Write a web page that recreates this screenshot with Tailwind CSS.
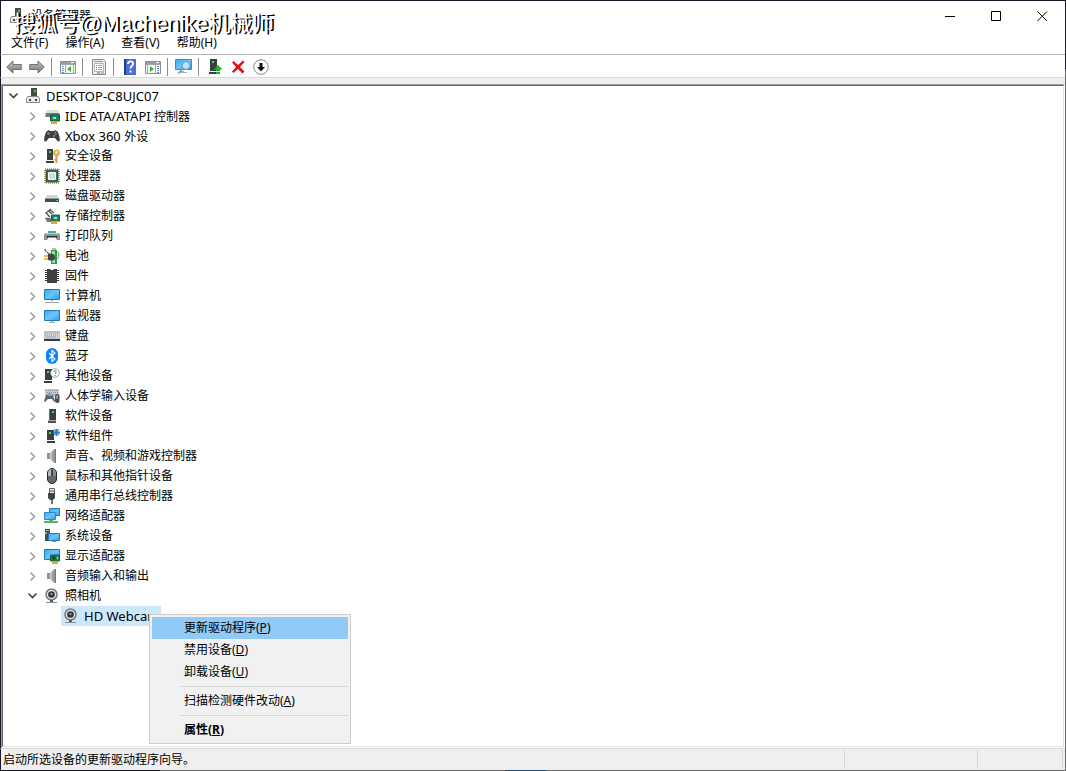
<!DOCTYPE html>
<html lang="zh-CN">
<head>
<meta charset="utf-8">
<title>设备管理器</title>
<script src="https://cdn.jsdelivr.net/npm/@tailwindcss/browser@4"></script>
</head>
<body class="h-screen overflow-hidden bg-[#1b1728] font-['Noto_Sans','Noto_Sans_CJK_SC',sans-serif] text-xs text-black">
<svg class="absolute size-0" aria-hidden="true">
  <defs>
    <linearGradient id="sky" x1="0" y1="0" x2="1" y2="1"><stop offset="0" stop-color="#3aa9f0"/><stop offset=".5" stop-color="#6cc4fb"/><stop offset="1" stop-color="#2b9fee"/></linearGradient>
    <linearGradient id="steel" x1="0" y1="0" x2="0" y2="1"><stop offset="0" stop-color="#c4c4c4"/><stop offset="1" stop-color="#757575"/></linearGradient>
    <linearGradient id="cone" x1="0" y1="0" x2="1" y2="0"><stop offset="0" stop-color="#d5d8da"/><stop offset="1" stop-color="#7b8084"/></linearGradient>
  </defs>
  <symbol id="pc" viewBox="0 0 16 16"><rect x="6" y="0" width="6" height="9" fill="#4a4a4a"/><rect x="9" y="2" width="2" height="2" fill="#2fdc4a"/><path d="M2.500 8.500h11l1 2v4h-13v-4z" fill="#ececec" stroke="#8a8a8a"/><path d="M4 11h2v2H4zM10 11h2v2h-2z" fill="#444"/></symbol>
  <symbol id="ide" viewBox="0 0 16 16"><path d="M3 2h11l1.500 3H1.500z" fill="#dcdfe0"/><path d="M1.500 5h14v4h-14z" fill="#74797b"/><path d="M6.500 7h9v6h-9z" fill="#17875a" stroke="#075c3b"/><path d="M9 9h3v2H9z" fill="#a8dfc6"/><path d="M7 13.500h6V16H7z" fill="#f0a020"/></symbol>
  <symbol id="pad" viewBox="0 0 16 16"><path d="M3 3l2-1 1 1h4l1-1 2 1c1.500 1.500 3 6 2.800 9-.3 2-1.800 1.800-2.800.5L11 10H5l-2 2.500C2 13.800.5 14 .2 12 0 9 1.500 4.500 3 3z" fill="#3d3f41"/><circle cx="4.500" cy="5.500" r="1.300" fill="#888"/><circle cx="10" cy="8" r="1" fill="#888"/><path d="M11 4h1v1h-1z" fill="#e8b820"/><path d="M12 5h1v1h-1z" fill="#e03a2e"/><path d="M10 5h1v1h-1z" fill="#2b7fe0"/><path d="M11 6h1v1h-1z" fill="#35b74a"/></symbol>
  <symbol id="tower" viewBox="0 0 16 16"><path d="M5 1h7v11H5z" fill="#3c3f41"/><path d="M4 12.500h8V15H4z" fill="#505456"/><path d="M8 3h2v2H8z" fill="#37e84e"/><path d="M5 1h1v11H5z" fill="#6a6d70"/></symbol>
  <symbol id="key" viewBox="0 0 16 16"><path d="M3 1h6v11H3zM2 13h8v2H2z" fill="#3c3f41"/><path d="M5 3h2v2H5z" fill="#37e84e"/><circle cx="12.500" cy="5" r="3" fill="#edbd68" stroke="#c8872e" stroke-width=".7"/><circle cx="12.500" cy="4" r="1" fill="#fff"/><path d="M11.500 8h2v7h-2zM10 11h1.500v1.500H10z" fill="#dc9f42"/></symbol>
  <symbol id="cpu" viewBox="0 0 16 16"><path d="M1 1h14v14H1z" fill="none" stroke="#b98b3b" stroke-width="1.500" stroke-dasharray="1 1"/><path d="M1.500 1.500h13v13h-13z" fill="#2f6a50"/><path d="M4.500 4.500h7v7h-7z" fill="#dadada" stroke="#f7f7f7"/></symbol>
  <symbol id="disk" viewBox="0 0 16 16"><path d="M3 7h10l2 3.500H1z" fill="#d5d7d8"/><path d="M1 10.500h14V14H1z" fill="#45494b"/><path d="M12 12h2v1h-2z" fill="#32dc65"/></symbol>
  <symbol id="store" viewBox="0 0 16 16"><path d="M7 1L2 5l4 4M5 3.500L8 6M6 2l4 3" fill="none" stroke="#555" stroke-width="1.400"/><path d="M1 10h6v4H3z" fill="#777"/><path d="M1 9h5v1H1z" fill="#ccc"/><path d="M7.500 7h8v6h-8z" fill="#238667" stroke="#0d6445"/><path d="M10 9h3v2h-3z" fill="#a6ddc4"/><path d="M7 13.500h6V16H7z" fill="#f0a424"/></symbol>
  <symbol id="print" viewBox="0 0 16 16"><path d="M4 3h8v3H4z" fill="#40aaf0"/><path d="M8 3h4v3H8z" fill="#35b96a"/><path d="M1 5h14l1 2v5H0V7z" fill="#8b9194"/><path d="M1 5h14v1H1z" fill="#c7cacc"/><path d="M3 8h10v2H3z" fill="#303335"/><path d="M4 9.500h8l1 4H3z" fill="#f7f7f7"/></symbol>
  <symbol id="battery" viewBox="0 0 16 16"><path d="M7 2h6v14H7z" fill="#299a3e"/><path d="M8 0h4v2H8z" fill="#bbb"/><path d="M8 3h3v12H8z" fill="#8be698"/><path d="M13 4c3 0 2 6 0 7" fill="none" stroke="#777"/><path d="M1 1c0 3 3 4 5 5" fill="none" stroke="#333"/><path d="M4 6c5-1 7 0 7 3.500S8 13 4 12z" fill="#454545"/><path d="M0 8h4M0 11h4" stroke="#dda22a" stroke-width="1.300"/></symbol>
  <symbol id="chip" viewBox="0 0 16 16"><path d="M1 2.500h3M1 4.500h3M1 6.500h3M1 8.500h3M1 10.500h3M1 12.500h3M12 2.500h3M12 4.500h3M12 6.500h3M12 8.500h3M12 10.500h3M12 12.500h3" stroke="#333"/><path d="M3 1h3l1 1h2l1-1h3v14H3z" fill="#3f4142"/></symbol>
  <symbol id="computer" viewBox="0 0 16 16"><path d="M.5 1.500h15v10H.5z" fill="url(#sky)" stroke="#2279b5"/><path d="M7 12h2v1H7z" fill="#aaa"/><path d="M1 14h14v1H1z" fill="#8fa4b3"/></symbol>
  <symbol id="monitor" viewBox="0 0 16 16"><path d="M.5 2.500h15v10H.5z" fill="url(#sky)" stroke="#2279b5"/><path d="M7 13h2v1H7zM5 14h6v1H5z" fill="#a7b0b6"/></symbol>
  <symbol id="keys" viewBox="0 0 16 16"><path d="M0 3h16v8H0z" fill="#bcc3c6"/><path d="M0 11h16v2H0z" fill="#383c3e"/><path d="M1 5h14M2 7h13M1 9h2M12 9h3" stroke="#fff" stroke-dasharray="1 1"/><path d="M1 4.300h14M1 6h14M1 8h14" stroke="#858c90" stroke-width=".6" stroke-dasharray="1 1"/></symbol>
  <symbol id="bt" viewBox="0 0 16 16"><rect x="2" width="12" height="16" rx="6" fill="#0a84f4"/><path d="M5 5l6 6-3 2.500v-11L11 5l-6 6" fill="none" stroke="#fff" stroke-width="1.100"/></symbol>
  <symbol id="other" viewBox="0 0 16 16"><path d="M1 1h7v11H1zM0 13h8v2H0z" fill="#3c3f41"/><path d="M3 3h2v2H3z" fill="#37e84e"/><circle cx="11" cy="5" r="4.300" fill="#fff" stroke="#a4a8aa"/><path d="M9.500 3.800c.3-1.500 3-1.300 2.700.3-.2.800-1.200.9-1.200 1.900M11 7v1" fill="none" stroke="#477a9a"/></symbol>
  <symbol id="hid" viewBox="0 0 16 16"><path d="M1 1h14v7H1z" fill="#c4c9cb"/><path d="M2 2.500h12M3 4.500h11M2 6.500h12" stroke="#787e81" stroke-width=".8" stroke-dasharray="1 1"/><path d="M2 7h2l1 1h2l1-1h1l2 6-1 1-2-3H4l-3 3-1-1z" fill="#606568"/><path d="M4 5h3v3H4z" fill="#52ace7"/><rect x="11" y="6" width="4.500" height="9" rx="2" fill="#4b5053"/><path d="M12.500 7.500h1v3h-1z" fill="#eee"/></symbol>
  <symbol id="component" viewBox="0 0 16 16"><path d="M3 2h7v10H3zM3 13h8v2H3z" fill="#3c3f41"/><path d="M5 4h2v2H5z" fill="#37e84e"/><path d="M11.500 1h2v2.500H16v2h-2.500V8h-2V5.500H9v-2h2.500z" fill="#2b7dc5"/><path d="M10 1l5 6M15 1l-5 6" stroke="#2b7dc5"/></symbol>
  <symbol id="sound" viewBox="0 0 16 16"><path d="M3 5h3v6H3z" fill="#8f959a"/><path d="M6 5l4.500-4v14L6 11z" fill="url(#cone)"/><path d="M10.500 1h1.500v14h-1.500z" fill="#74797d"/></symbol>
  <symbol id="mouse" viewBox="0 0 16 16"><rect x="3.500" y=".5" width="9" height="15" rx="4.500" fill="#62686c" stroke="#24282b"/><path d="M4 6c0-3 1-5 3-5v7H4z" fill="#b7bec3"/><path d="M9 1c2 0 3 2 3 5v2H9z" fill="#858d93"/><path d="M7.500 2h1v6h-1z" fill="#202426"/></symbol>
  <symbol id="usb" viewBox="0 0 16 16"><path d="M5.500.5h5v5h-5z" fill="#e7e7e7" stroke="#666"/><path d="M6.500 2h1v2h-1zM8.500 2h1v2h-1z" fill="#555"/><path d="M4 5h7v5l-2 2H6l-2-2z" fill="#404446"/><path d="M7 12h2v4H7z" fill="#74787a"/></symbol>
  <symbol id="net" viewBox="0 0 16 16"><path d="M5.500.5h10v7h-10z" fill="url(#sky)" stroke="#2279b5"/><path d="M.5 4.500h11v7H.5z" fill="url(#sky)" stroke="#2a88c8"/><path d="M5 12h4v1h5v2H0v-2h5z" fill="#55b85f"/></symbol>
  <symbol id="system" viewBox="0 0 16 16"><path d="M1 1h5v12H1z" fill="#484c4f"/><path d="M2 2h3v1H2z" fill="#aaa"/><path d="M1 4h2v2H1z" fill="#37e84e"/><path d="M4.500 5.500h11v7h-11z" fill="url(#sky)" stroke="#2279b5"/><path d="M8 13h4v1H8z" fill="#999"/></symbol>
  <symbol id="display" viewBox="0 0 16 16"><path d="M.5 1.500h15v10H.5z" fill="url(#sky)" stroke="#2279b5"/><path d="M6.500 7h9v6h-9z" fill="#21805d" stroke="#0b5d40"/><circle cx="10" cy="10" r="1.700" fill="#193c30"/><path d="M13 9h1v2h-1z" fill="#bee5cf"/><path d="M8 13.500h6V16H8z" fill="#f0a424"/></symbol>
  <symbol id="cam" viewBox="0 0 16 16"><circle cx="7.500" cy="6.500" r="5.500" fill="#e0e0e0" stroke="#77797b" stroke-width="1.500"/><circle cx="7.500" cy="6.500" r="3.300" fill="#303439"/><circle cx="7.500" cy="6" r="1.300" fill="#7990a6"/><path d="M6 12h3v2H6z" fill="#5b5e60"/><path d="M2 14h11v1H2z" fill="#8b8e90"/></symbol>
  <symbol id="open" viewBox="0 0 16 16"><path d="M3.500 5.500l4 4 4-4" fill="none" stroke="#404040" stroke-width="1.600"/></symbol>
  <symbol id="closed" viewBox="0 0 16 16"><path d="M5.500 4.500l4 4-4 4" fill="none" stroke="#a0a0a0" stroke-width="1.600"/></symbol>
</svg>

<div class="h-full bg-[linear-gradient(90deg,#1b1728_15%,#6b6b6b_15%_47.4%,#1c4f78_47.4%_51.2%,#6b6b6b_51.2%)] pb-px">
<div class="flex h-full flex-col bg-[linear-gradient(#1b1728_9%,#6b6b6b_9%)] pt-px pr-px">
  <header class="border-l border-[#1b1728] bg-white">
    <div class="relative flex h-[30px] items-center pl-2">
      <svg class="size-4"><use href="#pc"/></svg>
      <h1 class="ml-1.5">设备管理器</h1>
      <p class="absolute top-[5px] left-3 text-[22px] leading-9 whitespace-nowrap text-white font-['Liberation_Sans','Noto_Sans_CJK_SC',sans-serif] [text-shadow:2px_1px_0_#000]">搜狐号@Machenike机械师</p>
      <div class="ml-auto flex self-stretch">
        <button type="button" aria-label="最小化" class="grid w-[46px] place-items-center"><svg class="size-[11px]" viewBox="0 0 11 11"><path d="M0 5.500h10" stroke="#000"/></svg></button>
        <button type="button" aria-label="最大化" class="grid w-[46px] place-items-center"><svg class="size-[11px]" viewBox="0 0 11 11"><path d="M.5 .5h9v9h-9z" fill="none" stroke="#000"/></svg></button>
        <button type="button" aria-label="关闭" class="grid w-[46px] place-items-center"><svg class="size-[11px]" viewBox="0 0 11 11"><path d="M.5 .5l9.500 9.500M10 .5L.5 10" stroke="#000"/></svg></button>
      </div>
    </div>
    <nav class="flex h-[23px] items-center gap-px pl-0.5">
      <button type="button" class="px-2">文件(F)</button>
      <button type="button" class="px-2">操作(A)</button>
      <button type="button" class="px-2">查看(V)</button>
      <button type="button" class="px-2">帮助(H)</button>
    </nav>
  </header>
  <div role="toolbar" aria-label="工具栏" class="flex h-6 items-center border-y border-l border-t-[#b4b4b4] border-b-[#dadada] border-l-[#1b1728] bg-white pt-0.5 pl-px">
    <button type="button" aria-label="后退" class="grid w-[23px] place-items-center"><svg class="size-4" viewBox="0 0 16 16"><path d="M.7 8l6.300-6v3.500h8.300v5H7V14z" fill="url(#steel)" stroke="#666" stroke-width=".9"/></svg></button>
    <button type="button" aria-label="前进" class="grid w-[23px] place-items-center"><svg class="size-4" viewBox="0 0 16 16"><path d="M15.300 8L9 2v3.500H.7v5H9V14z" fill="url(#steel)" stroke="#666" stroke-width=".9"/></svg></button>
    <span class="mr-1 ml-[3px] h-[18px] w-px bg-[#8c8c8c]"></span>
    <button type="button" aria-label="显示/隐藏控制台树" class="grid w-[23px] place-items-center"><svg class="size-4" viewBox="0 0 16 16"><path d="M.5 2.500h15v12H.5z" fill="#fafafa" stroke="#8a8f94"/><path d="M1 3h14v2H1z" fill="#8e9fae"/><path d="M11 3.500h3" stroke="#fff"/><path d="M2 7.500h2M2 9.500h2M2 11.500h2M2 13.500h2" stroke="#5d8fb8"/><path d="M5.500 6v9M13.500 6v9M1 5.500h14" stroke="#a2a6aa"/><path d="M7 10l4-3v6z" fill="#39b52d"/></svg></button>
    <span class="mr-1 ml-[3px] h-[18px] w-px bg-[#8c8c8c]"></span>
    <button type="button" aria-label="属性" class="grid w-[23px] place-items-center"><svg class="size-4" viewBox="0 0 16 16"><path d="M1.500.5h11l2 2v13h-13z" fill="#f0f0f0" stroke="#888"/><path d="M3 2.500h9" stroke="#999"/><path d="M3.500 4.500h9v8h-9z" fill="#fff" stroke="#b4b4b4"/><path d="M5 6.500h1M5 8.500h1M5 10.500h1" stroke="#348fb8"/><path d="M7 6.500h4M7 8.500h4M7 10.500h4" stroke="#a2a2a2"/><path d="M10 14h3" stroke="#888"/><path d="M6 13h3v2H6z" fill="#6bc3da"/></svg></button>
    <span class="mr-1 ml-[3px] h-[18px] w-px bg-[#8c8c8c]"></span>
    <button type="button" aria-label="帮助" class="grid w-[23px] place-items-center"><svg class="size-4" viewBox="0 0 16 16"><path d="M2 0h12v16H2z" fill="#4a70d0"/><path d="M2 0h2v16H2z" fill="#213f91"/><path d="M6 5c0-3.500 5.500-3.500 5 0-.2 2-2.500 2-2.500 4.500M8.500 11.500v2" fill="none" stroke="#fff" stroke-width="1.900"/></svg></button>
    <button type="button" aria-label="显示/隐藏操作窗格" class="grid w-[23px] place-items-center"><svg class="size-4" viewBox="0 0 16 16"><path d="M.5 2.500h15v12H.5z" fill="#fafafa" stroke="#8a8f94"/><path d="M1 3h14v2H1z" fill="#8e9fae"/><path d="M11 3.500h3" stroke="#fff"/><path d="M12 7.500h2M12 9.500h2M12 11.500h2M12 13.500h2" stroke="#5d8fb8"/><path d="M2.500 6v9M10.500 6v9M1 5.500h14" stroke="#a2a6aa"/><path d="M9 10L5 7v6z" fill="#39b52d"/></svg></button>
    <span class="mr-1 ml-[3px] h-[18px] w-px bg-[#8c8c8c]"></span>
    <button type="button" aria-label="扫描检测硬件改动" class="grid w-[23px] place-items-center"><svg class="h-4 w-[17px]" viewBox="0 0 17 16"><path d="M.5.500h16v10H.5z" fill="url(#sky)" stroke="#398fba"/><path d="M5 12h4v1h3v1H3v-1h2z" fill="#9eb1bc"/><circle cx="11" cy="6.500" r="4" fill="#d5effc" fill-opacity=".8" stroke="#6c93a9"/><path d="M8.500 9.500L3 14.500" stroke="#7999aa" stroke-width="1.500"/></svg></button>
    <span class="mr-1 ml-[3px] h-[18px] w-px bg-[#8c8c8c]"></span>
    <button type="button" aria-label="更新驱动程序" class="grid w-[23px] place-items-center"><svg class="size-4" viewBox="0 0 16 16"><path d="M3 0h7v12H3zM2 13h7v2H2z" fill="#3c3f41"/><path d="M5 2h2v2H5z" fill="#37e84e"/><path d="M11 6l4.500 4.500H13V12H9v-1.500H6.500zM9 13h4v2H9z" fill="#19b52d"/></svg></button>
    <button type="button" aria-label="卸载设备" class="grid w-[23px] place-items-center"><svg class="size-4" viewBox="0 0 16 16"><path d="M2 3.500L3.500 2 8 6l5-4.500 1.500 1.500L10 8l4.500 4.500-2 2L8 10l-4.500 4L2 12.500 6 8z" fill="#df1019"/></svg></button>
    <button type="button" aria-label="禁用设备" class="grid w-[23px] place-items-center"><svg class="size-4" viewBox="0 0 16 16"><circle cx="8" cy="8" r="7.300" fill="#fff" stroke="#858585"/><path d="M6.500 4h3v4H12l-4 4.500L4 8h2.500z" fill="#111"/></svg></button>
  </div>
  <div class="h-1.5 shrink-0 border-l border-[#1b1728] bg-[#efefef]"></div>
  <main class="min-h-0 flex-1 border-l border-[#1b1728] bg-white">
    <div class="h-full border border-t-[#a0a0a0] border-r-white border-b-white border-l-[#a0a0a0]">
      <ul id="tree" role="tree" aria-label="设备" class="h-full border border-t-[#696969] border-r-[#e3e3e3] border-b-[#e3e3e3] border-l-[#696969]"></ul>
    </div>
  </main>
  <footer class="flex h-[22px] shrink-0 items-stretch border-t border-l border-t-[#d7d7d7] border-l-[#1b1728] bg-[#efefef] pr-0.5">
    <p class="flex flex-1 items-center pl-0.5">启动所选设备的更新驱动程序向导。</p>
    <span class="my-px w-[133px] border-l border-[#d7d7d7]"></span>
    <span class="my-px w-[86px] border-x border-[#d7d7d7]"></span>
  </footer>
</div>
</div>

<template id="context-menu">
  <div role="menu" class="absolute top-2 left-[88px] z-10 w-[202px] border border-[#ccc] bg-[#f1f1f1] p-0.5">
    <button type="button" role="menuitem" class="block h-[22px] w-full bg-[#91c9f7] pl-8 text-left">更新驱动程序(<u>P</u>)</button>
    <button type="button" role="menuitem" class="block h-[22px] w-full pl-8 text-left">禁用设备(<u>D</u>)</button>
    <button type="button" role="menuitem" class="block h-[22px] w-full pl-8 text-left">卸载设备(<u>U</u>)</button>
    <hr class="my-[3px] ml-7 border-[#d7d7d7]">
    <button type="button" role="menuitem" class="block h-[22px] w-full pl-8 text-left">扫描检测硬件改动(<u>A</u>)</button>
    <hr class="my-[3px] ml-7 border-[#d7d7d7]">
    <button type="button" role="menuitem" class="block h-[22px] w-full pl-8 text-left font-bold">属性(<u>R</u>)</button>
  </div>
</template>
<script>
  // Each entry: icon, Latin part of the name, Chinese part of the name, expanded.
  const devices = [
    ['ide', 'IDE ATA/ATAPI ', '控制器'], ['pad', 'Xbox 360 ', '外设'], ['key', '', '安全设备'], ['cpu', '', '处理器'],
    ['disk', '', '磁盘驱动器'], ['store', '', '存储控制器'], ['print', '', '打印队列'], ['battery', '', '电池'],
    ['chip', '', '固件'], ['computer', '', '计算机'], ['monitor', '', '监视器'], ['keys', '', '键盘'], ['bt', '', '蓝牙'],
    ['other', '', '其他设备'], ['hid', '', '人体学输入设备'], ['tower', '', '软件设备'], ['component', '', '软件组件'],
    ['sound', '', '声音、视频和游戏控制器'], ['mouse', '', '鼠标和其他指针设备'], ['usb', '', '通用串行总线控制器'],
    ['net', '', '网络适配器'], ['system', '', '系统设备'], ['display', '', '显示适配器'], ['sound', '', '音频输入和输出'], ['cam', '', '照相机', true]
  ];
  const label = (latin, han) => `<span class="whitespace-nowrap leading-5">${latin ? `<span class="text-[13px]">${latin}</span>` : ''}${han}</span>`;
  const row = (icon, latin, han, pad, open) => `
    <li role="treeitem" aria-expanded="${open}" class="flex h-5 items-center ${pad}">
      <button type="button" aria-label="${open ? '折叠' : '展开'} ${latin}${han}" class="mr-[3px]"><svg class="size-4"><use href="#${open ? 'open' : 'closed'}"/></svg></button>
      <svg class="mr-[5px] size-4"><use href="#${icon}"/></svg>
      ${label(latin, han)}
    </li>`;
  document.getElementById('tree').innerHTML =
    row('pc', 'DESKTOP-C8UJC07', '', 'pl-[3px]', true) +
    devices.map(([icon, latin, han, open]) => row(icon, latin, han, 'pl-[22px]', !!open)).join('') + `
    <li role="treeitem" aria-selected="true" class="relative ml-[58px] flex h-5 w-[100px] items-center bg-[#cce8ff] pl-0.5">
      <svg class="mr-[5px] size-4"><use href="#cam"/></svg>
      ${label('HD Webcam', '')}
      ${document.getElementById('context-menu').innerHTML}
    </li>`;
</script>
</body>
</html>
